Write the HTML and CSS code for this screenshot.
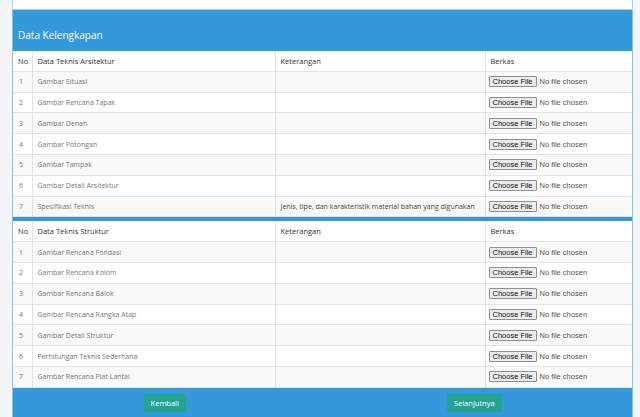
FILE: index.html
```html
<!DOCTYPE html>
<html lang="id">
<head>
<meta charset="utf-8">
<title>Data Kelengkapan</title>
<link rel="stylesheet" href="styles.css">
</head>
<body>
<div class="page">
  <div class="prev-panel"></div>
  <section class="panel">
    <h2 class="panel-title">Data Kelengkapan</h2>

    <table class="tbl">
      <colgroup><col class="c-no"><col class="c-name"><col class="c-ket"><col class="c-file"></colgroup>
      <thead>
        <tr><th>No</th><th>Data Teknis Arsitektur</th><th>Keterangan</th><th>Berkas</th></tr>
      </thead>
      <tbody>
        <tr><td class="no">1</td><td class="name">Gambar Situasi</td><td class="ket"></td><td class="fcell"><span class="file"><span class="file-btn">Choose File</span><span class="file-lbl">No file chosen</span></span></td></tr>
        <tr><td class="no">2</td><td class="name">Gambar Rencana Tapak</td><td class="ket"></td><td class="fcell"><span class="file"><span class="file-btn">Choose File</span><span class="file-lbl">No file chosen</span></span></td></tr>
        <tr><td class="no">3</td><td class="name">Gambar Denah</td><td class="ket"></td><td class="fcell"><span class="file"><span class="file-btn">Choose File</span><span class="file-lbl">No file chosen</span></span></td></tr>
        <tr><td class="no">4</td><td class="name">Gambar Potongan</td><td class="ket"></td><td class="fcell"><span class="file"><span class="file-btn">Choose File</span><span class="file-lbl">No file chosen</span></span></td></tr>
        <tr><td class="no">5</td><td class="name">Gambar Tampak</td><td class="ket"></td><td class="fcell"><span class="file"><span class="file-btn">Choose File</span><span class="file-lbl">No file chosen</span></span></td></tr>
        <tr><td class="no">6</td><td class="name">Gambar Detail Arsitektur</td><td class="ket"></td><td class="fcell"><span class="file"><span class="file-btn">Choose File</span><span class="file-lbl">No file chosen</span></span></td></tr>
        <tr><td class="no">7</td><td class="name">Spesifikasi Teknis</td><td class="ket">Jenis, tipe, dan karakteristik material bahan yang digunakan</td><td class="fcell"><span class="file"><span class="file-btn">Choose File</span><span class="file-lbl">No file chosen</span></span></td></tr>
      </tbody>
    </table>

    <table class="tbl tbl-second">
      <colgroup><col class="c-no"><col class="c-name"><col class="c-ket"><col class="c-file"></colgroup>
      <thead>
        <tr><th>No</th><th>Data Teknis Struktur</th><th>Keterangan</th><th>Berkas</th></tr>
      </thead>
      <tbody>
        <tr><td class="no">1</td><td class="name">Gambar Rencana Fondasi</td><td class="ket"></td><td class="fcell"><span class="file"><span class="file-btn">Choose File</span><span class="file-lbl">No file chosen</span></span></td></tr>
        <tr><td class="no">2</td><td class="name">Gambar Rencana Kolom</td><td class="ket"></td><td class="fcell"><span class="file"><span class="file-btn">Choose File</span><span class="file-lbl">No file chosen</span></span></td></tr>
        <tr><td class="no">3</td><td class="name">Gambar Rencana Balok</td><td class="ket"></td><td class="fcell"><span class="file"><span class="file-btn">Choose File</span><span class="file-lbl">No file chosen</span></span></td></tr>
        <tr><td class="no">4</td><td class="name">Gambar Rencana Rangka Atap</td><td class="ket"></td><td class="fcell"><span class="file"><span class="file-btn">Choose File</span><span class="file-lbl">No file chosen</span></span></td></tr>
        <tr><td class="no">5</td><td class="name">Gambar Detail Struktur</td><td class="ket"></td><td class="fcell"><span class="file"><span class="file-btn">Choose File</span><span class="file-lbl">No file chosen</span></span></td></tr>
        <tr><td class="no">6</td><td class="name">Perhitungan Teknis Sederhana</td><td class="ket"></td><td class="fcell"><span class="file"><span class="file-btn">Choose File</span><span class="file-lbl">No file chosen</span></span></td></tr>
        <tr><td class="no">7</td><td class="name">Gambar Rencana Plat Lantai</td><td class="ket"></td><td class="fcell"><span class="file"><span class="file-btn">Choose File</span><span class="file-lbl">No file chosen</span></span></td></tr>
      </tbody>
    </table>

    <div class="actions">
      <div class="action-col"><a class="btn" href="#">Kembali</a></div>
      <div class="action-col"><a class="btn" href="#">Selanjutnya</a></div>
    </div>
  </section>
</div>
</body>
</html>
```

FILE: styles.css
```css
html, body {
  margin: 0;
  padding: 0;
  background: #f3f5f6;
  font-family: "Open Sans", "Liberation Sans", sans-serif;
}

.page {
  padding: 0 7px 0 12px;
}

.prev-panel {
  height: 9px;
  background: #ffffff;
  border: 1px solid #a9d0ec;
  border-top: 0;
}

.panel {
  background: #3498db;
  border: 1px solid #86c0e9;
  border-top: 0;
  min-height: 420px;
}

.panel-title {
  margin: 0;
  height: 41px;
  box-sizing: border-box;
  padding: 17px 5px 0;
  font-size: 10px;
  line-height: 16px;
  font-weight: 400;
  color: #ffffff;
}

.tbl {
  width: 100%;
  table-layout: fixed;
  border-collapse: collapse;
  background: #ffffff;
  font-size: 7px;
}

.tbl-second {
  margin-top: 4px;
}

.c-no { width: 19px; }
.c-name { width: 243px; }
.c-ket { width: 210px; }
.c-file { width: auto; }

.tbl th,
.tbl td {
  height: 19.8px;
  padding: 0 5px;
  border: 1px solid #e3e3e3;
  text-align: left;
  vertical-align: middle;
  white-space: nowrap;
  overflow: hidden;
}

.tbl tr > :first-child { border-left: 0; }
.tbl tr > :last-child { border-right: 0; }
.tbl thead th { border-top: 0; }

.tbl th {
  font-weight: 400;
  font-size: 7.5px;
  color: #333333;
}

.tbl tbody tr:nth-child(odd) td {
  background: #f9f9f9;
}

.tbl td.no {
  color: #777777;
  padding-left: 6px;
}

.tbl td.name {
  color: #777777;
}

.tbl td.ket {
  color: #444444;
}

.tbl td.fcell {
  padding-left: 3px;
}

.file {
  display: flex;
  align-items: center;
  gap: 3px;
  font-family: "Liberation Sans", Arial, sans-serif;
  font-size: 7.5px;
}

.file-btn {
  display: inline-block;
  height: 11px;
  line-height: 9px;
  box-sizing: border-box;
  padding: 0 3px;
  border: 1px solid #8f8f8f;
  border-radius: 1px;
  background: #ececec;
  color: #111111;
}

.file-lbl {
  color: #555555;
}

.actions {
  display: flex;
  padding: 6px 0 0;
}

.action-col {
  flex: 1;
  display: flex;
  justify-content: center;
  padding-right: 6px;
}

.btn {
  display: inline-block;
  height: 18px;
  line-height: 18px;
  padding: 0 7px;
  background: #22a394;
  color: #ffffff;
  font-size: 7.5px;
  text-decoration: none;
}
```
